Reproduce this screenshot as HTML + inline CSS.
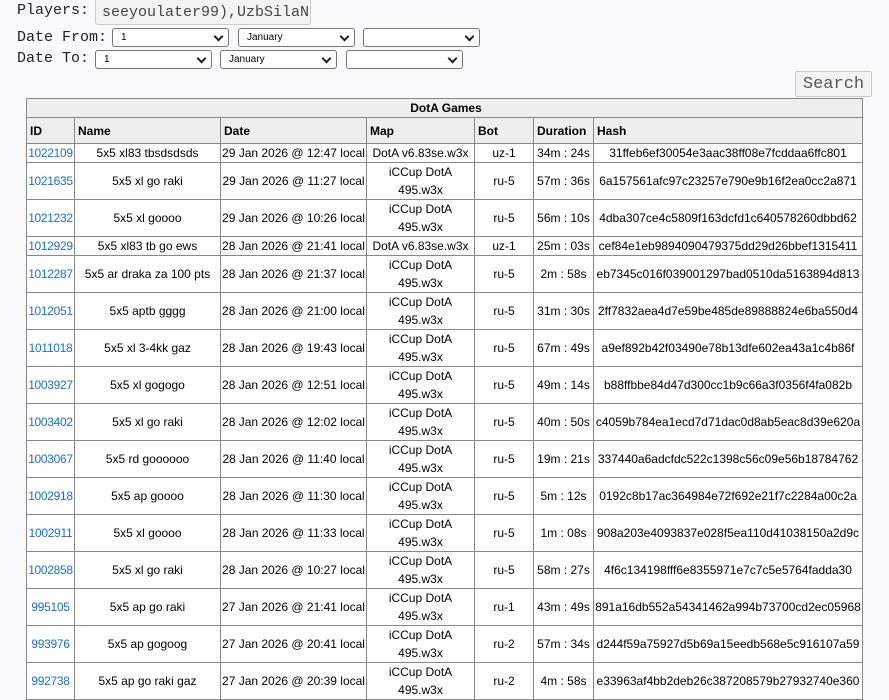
<!DOCTYPE html>
<html><head><meta charset="utf-8"><style>
body{margin:0;background:#f8f9fa;width:889px;height:692px;overflow:hidden;position:relative;font-family:"Liberation Sans",Arial,sans-serif;}
.lbl{position:absolute;font-family:"Liberation Mono",monospace;font-size:15px;color:#222;}
.inp{position:absolute;left:95px;top:-2px;width:216px;height:27px;border:1px solid #ccc;border-radius:3px;background:#f3f3f3;font-family:"Liberation Mono",monospace;font-size:15px;color:#444;line-height:27px;padding-left:6px;box-sizing:border-box;overflow:hidden;white-space:nowrap}
.sel{position:absolute;height:19px;width:117px;border:1px solid #767676;border-radius:3px;background:#fff;box-sizing:border-box;font-size:10px;line-height:17px;padding-left:8px;color:#000}
.sel:after{content:"";position:absolute;right:6px;top:4px;width:5px;height:5px;border-right:2px solid #222;border-bottom:2px solid #222;transform:rotate(45deg)}
.btn{position:absolute;left:795px;top:71px;width:77px;height:26px;border:1px solid #ccc;border-radius:2px;background:#f3f3f3;font-family:"Liberation Mono",monospace;font-size:17px;color:#555;text-align:center;line-height:26px;box-sizing:border-box}
table{position:absolute;left:26px;top:98px;width:836px;border-collapse:collapse;font-size:12px;background:#fff;table-layout:fixed}
td,th{border:1px solid #888;padding:0;text-align:center;line-height:18px;overflow:hidden;white-space:nowrap}
th{background:#eee;text-align:left;font-weight:bold;padding-left:3px}
th.t{text-align:center}
td.w{white-space:normal;line-height:18px}
td:first-child{letter-spacing:-0.3px}
a{color:#1a6fd0;text-decoration:none}
tr.s td{height:18px}
tr.d td{height:36px}
</style></head><body>
<div class="lbl" style="left:17px;top:2px">Players:</div>
<div class="inp">seeyoulater99),UzbSilaNa</div>
<div class="lbl" style="left:17px;top:29px">Date From:</div>
<div class="sel" style="left:112px;top:28px">1</div>
<div class="sel" style="left:238px;top:28px">January</div>
<div class="sel" style="left:363px;top:28px"></div>
<div class="lbl" style="left:17px;top:50px">Date To:</div>
<div class="sel" style="left:95px;top:50px">1</div>
<div class="sel" style="left:220px;top:50px">January</div>
<div class="sel" style="left:346px;top:50px"></div>
<div class="btn">Search</div>
<table>
<colgroup><col style="width:48px"><col style="width:146px"><col style="width:146px"><col style="width:108px"><col style="width:59px"><col style="width:60px"><col style="width:269px"></colgroup>
<tr><th class="t" colspan="7" style="height:18px">DotA Games</th></tr>
<tr><th style="height:25px">ID</th><th>Name</th><th>Date</th><th>Map</th><th>Bot</th><th>Duration</th><th>Hash</th></tr>
<tr class="s"><td><a>1022109</a></td><td>5x5 xl83 tbsdsdsds</td><td>29 Jan 2026 @ 12:47 local</td><td>DotA v6.83se.w3x</td><td>uz-1</td><td>34m : 24s</td><td>31ffeb6ef30054e3aac38ff08e7fcddaa6ffc801</td></tr>
<tr class="d"><td><a>1021635</a></td><td>5x5 xl go raki</td><td>29 Jan 2026 @ 11:27 local</td><td class="w">iCCup DotA 495.w3x</td><td>ru-5</td><td>57m : 36s</td><td>6a157561afc97c23257e790e9b16f2ea0cc2a871</td></tr>
<tr class="d"><td><a>1021232</a></td><td>5x5 xl goooo</td><td>29 Jan 2026 @ 10:26 local</td><td class="w">iCCup DotA 495.w3x</td><td>ru-5</td><td>56m : 10s</td><td>4dba307ce4c5809f163dcfd1c640578260dbbd62</td></tr>
<tr class="s"><td style="height:17px"><a>1012929</a></td><td>5x5 xl83 tb go ews</td><td>28 Jan 2026 @ 21:41 local</td><td>DotA v6.83se.w3x</td><td>uz-1</td><td>25m : 03s</td><td>cef84e1eb9894090479375dd29d26bbef1315411</td></tr>
<tr class="d"><td><a>1012287</a></td><td>5x5 ar draka za 100 pts</td><td>28 Jan 2026 @ 21:37 local</td><td class="w">iCCup DotA 495.w3x</td><td>ru-5</td><td>2m : 58s</td><td>eb7345c016f039001297bad0510da5163894d813</td></tr>
<tr class="d"><td><a>1012051</a></td><td>5x5 aptb gggg</td><td>28 Jan 2026 @ 21:00 local</td><td class="w">iCCup DotA 495.w3x</td><td>ru-5</td><td>31m : 30s</td><td>2ff7832aea4d7e59be485de89888824e6ba550d4</td></tr>
<tr class="d"><td><a>1011018</a></td><td>5x5 xl 3-4kk gaz</td><td>28 Jan 2026 @ 19:43 local</td><td class="w">iCCup DotA 495.w3x</td><td>ru-5</td><td>67m : 49s</td><td>a9ef892b42f03490e78b13dfe602ea43a1c4b86f</td></tr>
<tr class="d"><td><a>1003927</a></td><td>5x5 xl gogogo</td><td>28 Jan 2026 @ 12:51 local</td><td class="w">iCCup DotA 495.w3x</td><td>ru-5</td><td>49m : 14s</td><td>b88ffbbe84d47d300cc1b9c66a3f0356f4fa082b</td></tr>
<tr class="d"><td><a>1003402</a></td><td>5x5 xl go raki</td><td>28 Jan 2026 @ 12:02 local</td><td class="w">iCCup DotA 495.w3x</td><td>ru-5</td><td>40m : 50s</td><td>c4059b784ea1ecd7d71dac0d8ab5eac8d39e620a</td></tr>
<tr class="d"><td><a>1003067</a></td><td>5x5 rd goooooo</td><td>28 Jan 2026 @ 11:40 local</td><td class="w">iCCup DotA 495.w3x</td><td>ru-5</td><td>19m : 21s</td><td>337440a6adcfdc522c1398c56c09e56b18784762</td></tr>
<tr class="d"><td><a>1002918</a></td><td>5x5 ap goooo</td><td>28 Jan 2026 @ 11:30 local</td><td class="w">iCCup DotA 495.w3x</td><td>ru-5</td><td>5m : 12s</td><td>0192c8b17ac364984e72f692e21f7c2284a00c2a</td></tr>
<tr class="d"><td><a>1002911</a></td><td>5x5 xl goooo</td><td>28 Jan 2026 @ 11:33 local</td><td class="w">iCCup DotA 495.w3x</td><td>ru-5</td><td>1m : 08s</td><td>908a203e4093837e028f5ea110d41038150a2d9c</td></tr>
<tr class="d"><td><a>1002858</a></td><td>5x5 xl go raki</td><td>28 Jan 2026 @ 10:27 local</td><td class="w">iCCup DotA 495.w3x</td><td>ru-5</td><td>58m : 27s</td><td>4f6c134198fff6e8355971e7c7c5e5764fadda30</td></tr>
<tr class="d"><td><a>995105</a></td><td>5x5 ap go raki</td><td>27 Jan 2026 @ 21:41 local</td><td class="w">iCCup DotA 495.w3x</td><td>ru-1</td><td>43m : 49s</td><td>891a16db552a54341462a994b73700cd2ec05968</td></tr>
<tr class="d"><td><a>993976</a></td><td>5x5 ap gogoog</td><td>27 Jan 2026 @ 20:41 local</td><td class="w">iCCup DotA 495.w3x</td><td>ru-2</td><td>57m : 34s</td><td>d244f59a75927d5b69a15eedb568e5c916107a59</td></tr>
<tr class="d"><td><a>992738</a></td><td>5x5 ap go raki gaz</td><td>27 Jan 2026 @ 20:39 local</td><td class="w">iCCup DotA 495.w3x</td><td>ru-2</td><td>4m : 58s</td><td>e33963af4bb2deb26c387208579b27932740e360</td></tr>
</table>
</body></html>
